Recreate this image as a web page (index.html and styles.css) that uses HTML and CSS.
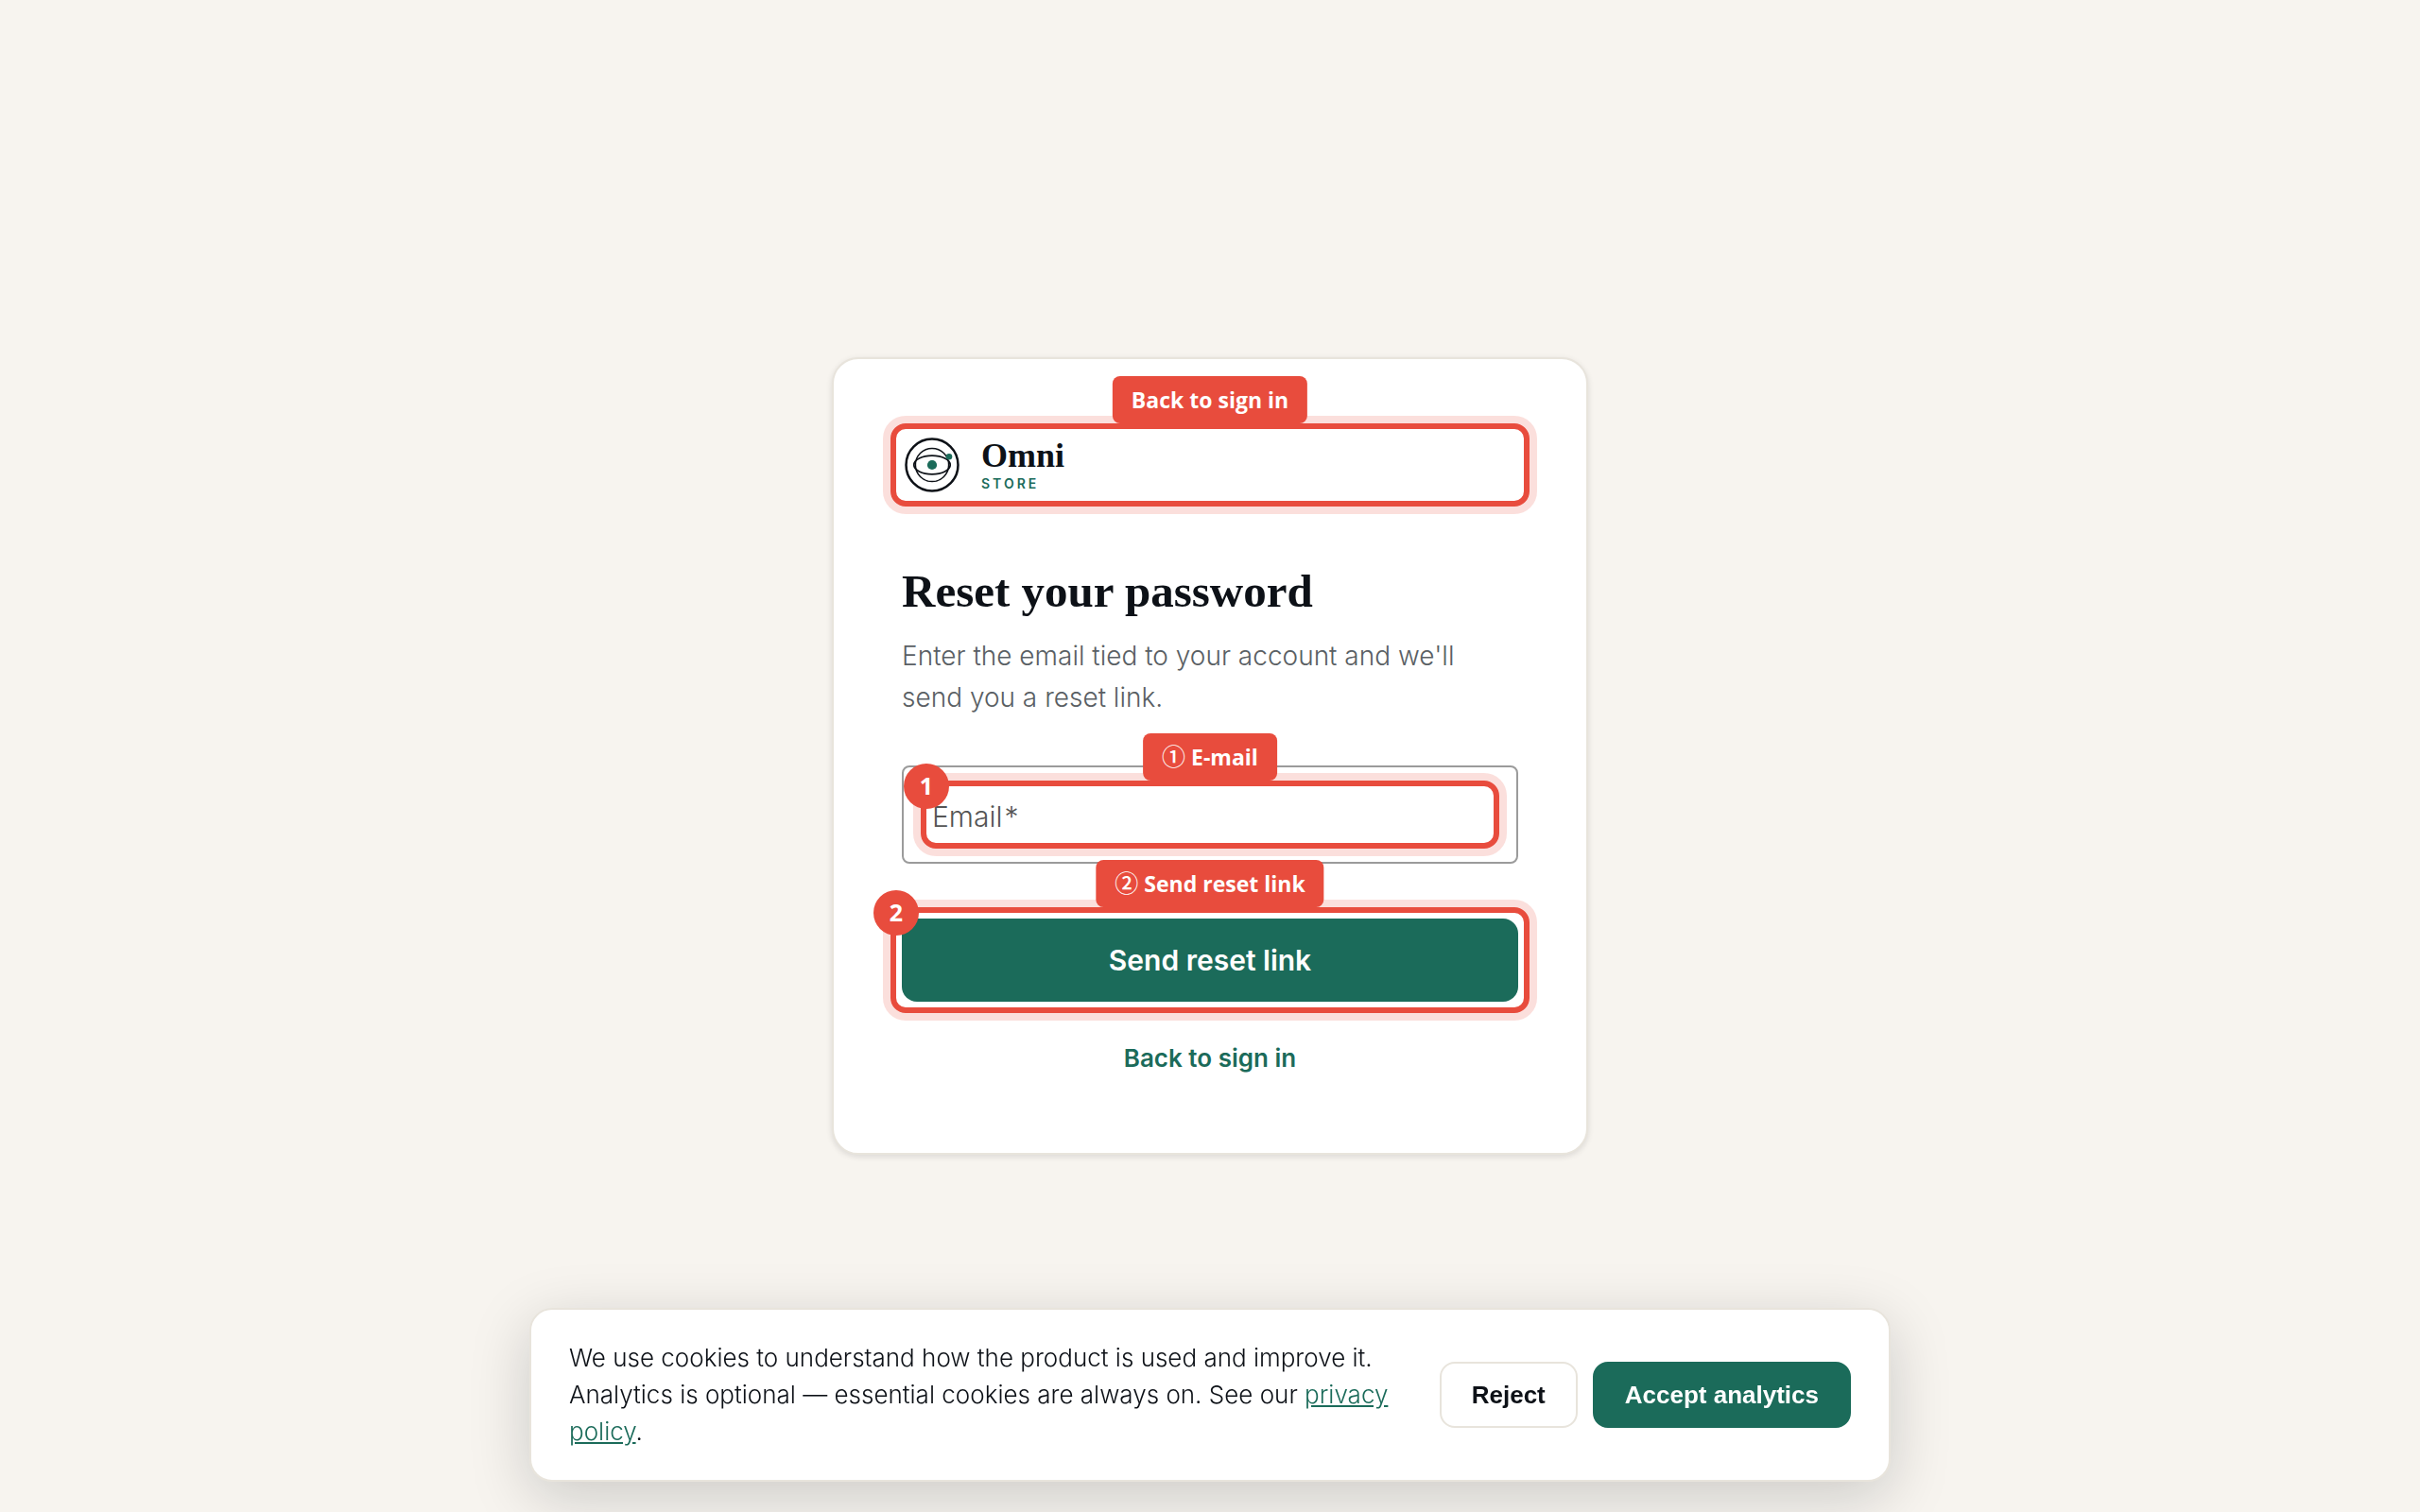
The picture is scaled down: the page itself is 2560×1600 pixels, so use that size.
FILE: index.html
```
<!DOCTYPE html>
<html lang="en">
<head>
	<meta charset="utf-8">
	<title>Reset your password</title>
	<link rel="stylesheet" href="styles.css">
</head>
<body>
	<main class="card">
		<div class="highlight">
			<a class="logo" href="#signin">
				<svg class="logo-mark" viewBox="0 0 64 64" fill="none" stroke="#0d1117" aria-hidden="true">
					<circle cx="32" cy="32" r="27.5" stroke-width="2.5"/>
					<circle cx="32" cy="32" r="17.6" stroke-width="1.5"/>
					<ellipse cx="32" cy="32" rx="19.2" ry="9.8" stroke-width="1.8"/>
					<circle cx="32" cy="32" r="5.1" fill="#1b6b5a" stroke="none"/>
					<circle cx="50" cy="23.2" r="3.3" fill="#1b6b5a" stroke="none"/>
				</svg>
				<span class="logo-text">
					<span class="logo-name">Omni</span>
					<span class="logo-sub">STORE</span>
				</span>
			</a>
			<span class="tag">Back to sign in</span>
		</div>

		<h1>Reset your password</h1>
		<p class="lead">Enter the email tied to your account and we'll send you a reset link.</p>

		<form>
			<div class="field">
				<div class="highlight">
					<label for="email">Email<span class="star">*</span></label>
					<input type="email" id="email" required>
					<span class="tag"><span class="tag-num">①</span> E-mail</span>
					<span class="badge">1</span>
				</div>
			</div>
			<div class="highlight">
				<button type="submit" class="submit-btn">Send reset link</button>
				<span class="tag"><span class="tag-num">②</span> Send reset link</span>
				<span class="badge">2</span>
			</div>
		</form>
		<a class="back-link" href="#signin">Back to sign in</a>
	</main>

	<div class="cookies">
		<p>We use cookies to understand how the product is used and improve it. Analytics is optional — essential cookies are always on. See our <a href="#privacy">privacy policy</a>.</p>
		<div class="cookie-actions">
			<button type="button" class="cookie-btn">Reject</button>
			<button type="button" class="cookie-btn accept">Accept analytics</button>
		</div>
	</div>
</body>
</html>
```
FILE: styles.css
```
* {
	box-sizing: border-box;
}

body {
	margin: 0;
	min-height: 100vh;
	display: flex;
	align-items: center;
	justify-content: center;
	background-color: #f7f4ef;
	color: #0d1117;
	font-family: Inter, "Liberation Sans", sans-serif;
}

.card {
	width: 100%;
	max-width: 800px;
	padding: 80px 72px;
	background-color: white;
	border: 2px solid #e8e4dc;
	border-radius: 28px;
	box-shadow: 0 2px 6px rgba(13, 17, 23, 0.12);
}

/* outlined element with its tag and number */
.highlight {
	position: relative;
}

.highlight::after {
	content: "";
	position: absolute;
	inset: -12px;
	border: 6px solid #e84c3d;
	border-radius: 16px;
	box-shadow: 0 0 0 8px rgba(232, 76, 61, 0.18);
	pointer-events: none;
}

.tag {
	position: absolute;
	z-index: 1;
	bottom: calc(100% + 12px);
	left: 50%;
	transform: translateX(-50%);
	height: 50px;
	padding: 0 20px;
	border-radius: 8px;
	background-color: #e84c3d;
	color: white;
	font-family: "Open Sans", sans-serif;
	font-size: 23px;
	font-weight: 700;
	line-height: 50px;
	white-space: nowrap;
}

.tag-num {
	font-family: "Noto Sans CJK JP", sans-serif;
	font-size: 25px;
	font-weight: 500;
	line-height: 1;
}

.badge {
	position: absolute;
	z-index: 1;
	top: -30px;
	left: -30px;
	width: 48px;
	height: 48px;
	border-radius: 50%;
	background-color: #e84c3d;
	color: white;
	font-family: "Open Sans", sans-serif;
	font-size: 25px;
	font-weight: 700;
	line-height: 46px;
	text-align: center;
}

.logo {
	display: flex;
	align-items: center;
	gap: 20px;
	color: inherit;
	text-decoration: none;
}

.logo-mark {
	width: 64px;
	height: 64px;
}

.logo-text {
	display: flex;
	flex-direction: column;
	gap: 4px;
}

.logo-name {
	font-family: "Liberation Serif", serif;
	font-size: 36px;
	font-weight: 700;
	line-height: 36px;
}

.logo-sub {
	color: #1b6b5a;
	font-size: 14px;
	font-weight: 600;
	letter-spacing: 3px;
	line-height: 16px;
}

h1 {
	margin: 72px 0 16px;
	font-family: "Liberation Serif", serif;
	font-size: 49px;
	font-weight: 700;
	line-height: 60px;
}

.lead {
	margin: 0 0 50px;
	color: #5a5f64;
	font-size: 28px;
	font-weight: 300;
	line-height: 44px;
}

.field {
	margin-bottom: 58px;
	padding: 26px 30px;
	border: 2px solid #9b9b9b;
	border-radius: 8px;
}

.field label {
	position: absolute;
	left: 0;
	line-height: 52px;
	color: #555555;
	font-size: 30px;
	font-weight: 300;
	pointer-events: none;
}

.star {
	margin-left: 2px;
}

.field input {
	display: block;
	width: 100%;
	height: 48px;
	padding: 0;
	border: none;
	outline: none;
	background: none;
	color: inherit;
	font: inherit;
	font-size: 30px;
}

.submit-btn {
	display: block;
	width: 100%;
	height: 88px;
	border: none;
	border-radius: 16px;
	background-color: #1b6b5a;
	color: white;
	font-family: inherit;
	font-size: 30px;
	font-weight: 600;
	cursor: pointer;
}

.back-link {
	display: block;
	width: fit-content;
	margin: 40px auto 0;
	color: #1b6b5a;
	font-size: 26px;
	font-weight: 600;
	line-height: 40px;
	text-decoration: none;
}

.cookies {
	position: fixed;
	bottom: 32px;
	left: 50%;
	transform: translateX(-50%);
	display: flex;
	align-items: center;
	gap: 32px;
	width: calc(100% - 64px);
	max-width: 1440px;
	padding: 31px 40px 32px;
	background-color: white;
	border: 2px solid #e8e4dc;
	border-radius: 24px;
	box-shadow: 0 16px 64px rgba(13, 17, 23, 0.18);
}

.cookies p {
	flex: 1;
	margin: 0;
	font-size: 26px;
	font-weight: 300;
	line-height: 39px;
}

.cookies a {
	color: #1b6b5a;
}

.cookie-actions {
	display: flex;
	gap: 16px;
}

.cookie-btn {
	padding: 18px 32px;
	border: 2px solid #e8e4dc;
	border-radius: 16px;
	background-color: white;
	color: #0d1117;
	font-family: "Liberation Sans", Arial, sans-serif;
	font-size: 26px;
	font-weight: 700;
	line-height: 30px;
	cursor: pointer;
}

.cookie-btn.accept {
	border-color: #1b6b5a;
	background-color: #1b6b5a;
	color: white;
}
```
